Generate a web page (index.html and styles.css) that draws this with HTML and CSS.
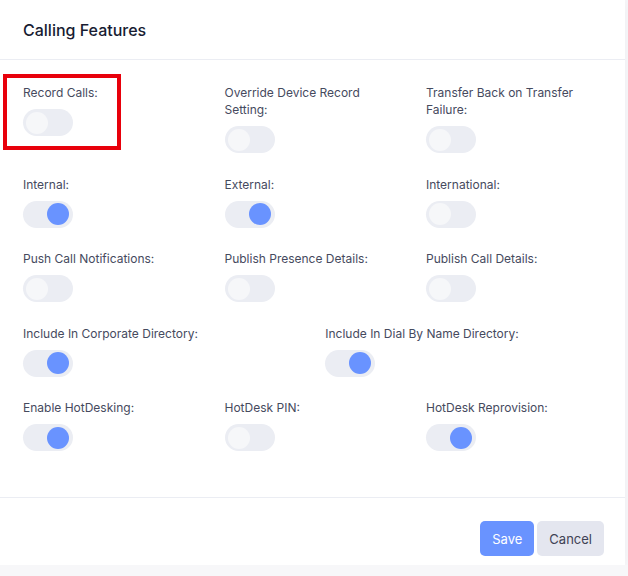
FILE: index.html
```html
<!DOCTYPE html>
<html lang="en">
<head>
  <meta charset="UTF-8">
  <title>Calling Features</title>
  <link rel="stylesheet" href="styles.css">
</head>
<body>

<div class="card">
  <div class="card-header">
    <h3>Calling Features</h3>
  </div>

  <div class="card-body">
    <div class="field">
      <label>Record Calls:</label>
      <span class="switch"></span>
      <div class="highlight"></div>
    </div>
    <div class="field">
      <label>Override Device Record Setting:</label>
      <span class="switch"></span>
    </div>
    <div class="field">
      <label>Transfer Back on Transfer Failure:</label>
      <span class="switch"></span>
    </div>

    <div class="field">
      <label>Internal:</label>
      <span class="switch on"></span>
    </div>
    <div class="field">
      <label>External:</label>
      <span class="switch on"></span>
    </div>
    <div class="field">
      <label>International:</label>
      <span class="switch"></span>
    </div>

    <div class="field">
      <label>Push Call Notifications:</label>
      <span class="switch"></span>
    </div>
    <div class="field">
      <label>Publish Presence Details:</label>
      <span class="switch"></span>
    </div>
    <div class="field">
      <label>Publish Call Details:</label>
      <span class="switch"></span>
    </div>

    <div class="field half">
      <label>Include In Corporate Directory:</label>
      <span class="switch on"></span>
    </div>
    <div class="field half">
      <label>Include In Dial By Name Directory:</label>
      <span class="switch on"></span>
    </div>

    <div class="field">
      <label>Enable HotDesking:</label>
      <span class="switch on"></span>
    </div>
    <div class="field">
      <label>HotDesk PIN:</label>
      <span class="switch"></span>
    </div>
    <div class="field">
      <label>HotDesk Reprovision:</label>
      <span class="switch on"></span>
    </div>
  </div>

  <div class="card-footer">
    <button class="btn btn-primary">Save</button>
    <button class="btn btn-secondary">Cancel</button>
  </div>
</div>

</body>
</html>
```

FILE: styles.css
```css
body {
  margin: 0;
  background: #f7f7f9;
  font-family: Inter, "Open Sans", sans-serif;
  color: #3f4254;
}
.card {
  width: 625px;
  background: #fff;
  box-shadow: 0 0 12px rgba(82, 63, 105, 0.05);
}
.card-header {
  height: 59px;
  padding: 0 23px;
  display: flex;
  align-items: center;
  border-bottom: 1px solid #ebedf3;
}
.card-header h3 {
  margin: 0;
  font-size: 16px;
  font-weight: 500;
  color: #181c32;
}
.card-body {
  display: grid;
  grid-template-columns: repeat(6, 100.75px);
  row-gap: 22.5px;
  padding: 24px 0 46px 23px;
}
.field {
  grid-column: span 2;
  position: relative;
  padding-right: 24px;
}
.field.half {
  grid-column: span 3;
}
.field label {
  display: block;
  font-size: 12px;
  line-height: 17px;
  margin-bottom: 8px;
  color: #464a5e;
}
.switch {
  display: block;
  position: relative;
  width: 50px;
  height: 27px;
  border-radius: 14px;
  background: #ebedf3;
}
.switch::after {
  content: "";
  position: absolute;
  top: 2.5px;
  left: 3px;
  width: 22px;
  height: 22px;
  border-radius: 50%;
  background: #f6f7f9;
}
.switch.on::after {
  left: 24px;
  background: #6993ff;
}
/* red frame drawn around the first option */
.highlight {
  position: absolute;
  top: -10px;
  left: -20px;
  width: 110px;
  height: 68px;
  border: 4px solid #e8000b;
}
.card-footer {
  display: flex;
  justify-content: flex-end;
  gap: 3px;
  padding: 23px 21px 9px;
  border-top: 1px solid #ebedf3;
}
.btn {
  height: 35px;
  padding: 0 12px;
  border: none;
  border-radius: 5px;
  font-family: inherit;
  font-size: 13px;
  cursor: pointer;
}
.btn-primary {
  background: #6993ff;
  color: #fff;
}
.btn-secondary {
  background: #e4e6ef;
  color: #3f4254;
}
```
